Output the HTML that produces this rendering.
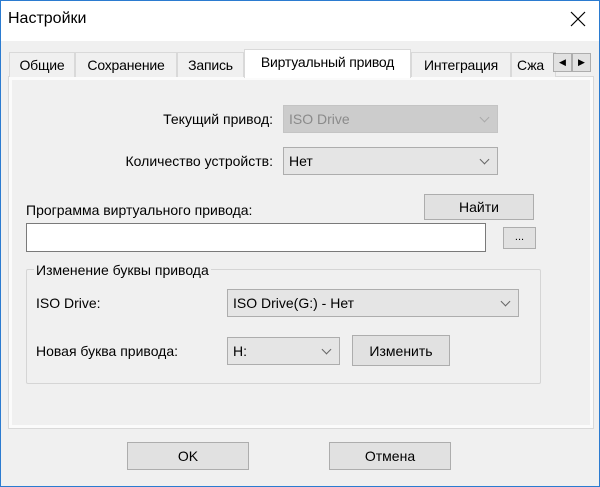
<!DOCTYPE html><html><head><style>
*{box-sizing:border-box}
body{margin:0;width:600px;height:487px;overflow:hidden;font-family:"Liberation Sans",sans-serif;font-size:14px;color:#000}
.win{position:absolute;left:0;top:0;width:600px;height:487px;border:1px solid #2b7bd0;background:#f0f0f0}
.title{position:absolute;left:0;top:0;width:598px;height:40px;background:#fff}
.a{position:absolute;white-space:nowrap}
.tab{position:absolute;top:51px;height:25px;border:1px solid #d9d9d9;border-bottom:none;background:#f0f0f0;padding:4px 0 0;text-align:center;font-size:14px;letter-spacing:-0.2px}
.panel{position:absolute;left:7px;top:75px;width:586px;height:353px;background:#fbfbfb;border:1px solid #d9d9d9}
.inner{position:absolute;left:11px;top:79px;width:578px;height:345px;background:#f0f0f0}
.cb{position:absolute;border:1px solid #adadad;background:#e5e5e5;padding:5px 5px;height:28px}
.btn{position:absolute;border:1px solid #adadad;background:#e1e1e1;text-align:center;padding-top:4px}
.chev{position:absolute;right:9px;top:8px;width:7px;height:7px;border-right:1px solid #666;border-bottom:1px solid #666;transform:rotate(45deg)}
</style></head><body><div class="win">
<div class="title"></div>
<div class="a" style="left:7px;top:9px;font-size:16px">Настройки</div>
<svg class="a" style="left:569px;top:10px" width="16" height="16"><path d="M1 1L15 15M15 1L1 15" stroke="#000" stroke-width="1.2"/></svg>
<div class="panel"></div><div class="inner"></div>
<div class="tab" style="left:8px;width:66px">Общие</div>
<div class="tab" style="left:74px;width:102px">Сохранение</div>
<div class="tab" style="left:176px;width:67px">Запись</div>
<div class="tab" style="left:410px;width:100px">Интеграция</div>
<div class="tab" style="left:510px;width:45px;text-align:left;padding-left:5px;overflow:hidden">Сжа</div>
<div class="tab" style="left:243px;top:48px;height:29px;width:167px;background:#fff;border-color:#d9d9d9">Виртуальный привод</div>
<div class="a" style="left:552px;top:52px;width:19px;height:19px;border:1px solid #adadad;background:#e1e1e1;font-size:9px;text-align:center;line-height:17px">◀</div>
<div class="a" style="left:571px;top:52px;width:19px;height:19px;border:1px solid #adadad;background:#e1e1e1;font-size:9px;text-align:center;line-height:17px">▶</div>
<div class="a" style="left:150px;top:110px;width:122px;text-align:right">Текущий привод:</div>
<div class="cb" style="left:282px;top:104px;width:215px;background:#ccc;color:#8a8a8a;border-color:#c4c4c4">ISO Drive<span class="chev" style="border-color:#aaa"></span></div>
<div class="a" style="left:100px;top:152px;width:172px;text-align:right">Количество устройств:</div>
<div class="cb" style="left:282px;top:146px;width:215px">Нет<span class="chev"></span></div>
<div class="a" style="left:25px;top:201px">Программа виртуального привода:</div>
<div class="btn" style="left:423px;top:193px;width:110px;height:26px">Найти</div>
<div class="a" style="left:25px;top:222px;width:460px;height:29px;background:#fff;border:1px solid #7a7a7a"></div>
<div class="btn" style="left:502px;top:226px;width:33px;height:22px;font-size:11px;padding-top:3px">...</div>
<div class="a" style="left:25px;top:268px;width:515px;height:115px;border:1px solid #d5d5d5;border-radius:2px"></div>
<div class="a" style="left:33px;top:261px;background:#f0f0f0;padding:0 2px">Изменение буквы привода</div>
<div class="a" style="left:35px;top:294px">ISO Drive:</div>
<div class="cb" style="left:226px;top:288px;width:292px">ISO Drive(G:) - Нет<span class="chev"></span></div>
<div class="a" style="left:35px;top:342px">Новая буква привода:</div>
<div class="cb" style="left:226px;top:336px;width:113px">H:<span class="chev"></span></div>
<div class="btn" style="left:351px;top:334px;width:98px;height:31px;padding-top:7px">Изменить</div>
<div class="btn" style="left:126px;top:441px;width:122px;height:28px;padding-top:5px">OK</div>
<div class="btn" style="left:328px;top:441px;width:122px;height:28px;padding-top:5px">Отмена</div>
</div></body></html>
